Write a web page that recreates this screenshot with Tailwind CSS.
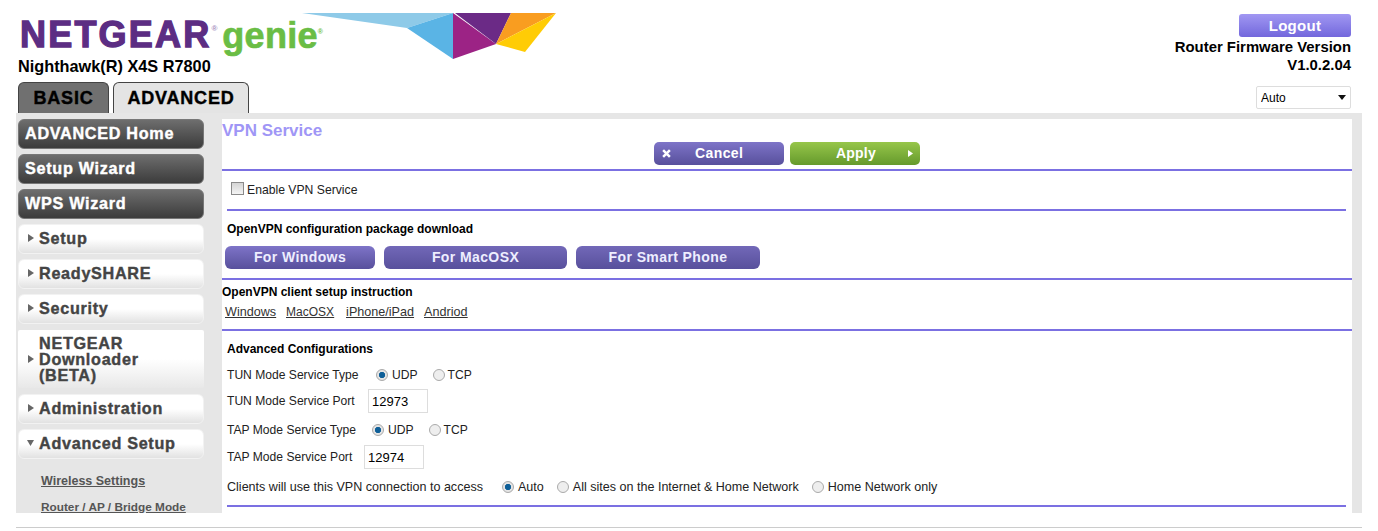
<!DOCTYPE html>
<html lang="en">
<head>
  <meta charset="UTF-8">
  <title>NETGEAR Router R7800</title>
  <script src="https://cdn.jsdelivr.net/npm/@tailwindcss/browser@4"></script>
</head>
<body class="relative bg-white h-[531px] overflow-hidden font-['Liberation_Sans',Arial,sans-serif] text-[12px] text-[#222]">

  <!-- header -->
  <header class="h-[113px] flex justify-between pl-[18px] pr-[27px]">
    <div class="flex flex-col">
      <div class="flex h-[43px] items-start pt-[14px]">
        <span class="ml-[2px] text-[36px] leading-[42px] font-bold tracking-[2.2px] text-[#5c2d83] [-webkit-text-stroke:1.3px_#5c2d83]">NETGEAR</span>
        <span class="text-[8px] leading-[30px] font-bold text-[#a58fbd]">®</span>
        <span class="ml-[5px] mt-[1px] text-[36px] leading-[42px] font-bold tracking-[0.3px] text-[#6abd45] [-webkit-text-stroke:0.7px_#6abd45]">genie</span>
        <span class="text-[7px] leading-[36px] font-bold text-[#6abd45]">®</span>
      </div>
      <div class="mt-[14px] text-[16.3px] leading-[18px] font-bold text-black">Nighthawk(R) X4S R7800</div>
      <nav class="mt-[7px] flex gap-[4px] font-bold text-[18px] tracking-[0.8px] text-black [-webkit-text-stroke:0.4px_#000]">
        <a class="w-[91px] h-[31px] flex items-center justify-center rounded-t-[6px] border border-b-0 border-[#444] bg-[#707070]">BASIC</a>
        <a class="w-[136px] h-[31px] flex items-center justify-center rounded-t-[6px] border border-b-0 border-[#444] bg-[#e4e4e4]">ADVANCED</a>
      </nav>
    </div>
    <div class="flex flex-col items-end pt-[14px]">
      <button class="w-[112px] h-[23px] rounded-[3px] bg-gradient-to-b from-[#a197f2] to-[#7367dc] text-white font-bold text-[15px] tracking-[0.3px] leading-[23px]">Logout</button>
      <div class="mt-[1px] text-right text-[14.9px] leading-[18px] font-bold text-black">Router Firmware Version<br>V1.0.2.04</div>
      <div class="relative mt-[12px] w-[95px] h-[23px]">
        <select class="appearance-none w-full h-full border border-[#ddd] rounded-[2px] pl-[4px] text-[12px] text-black bg-white">
          <option>Auto</option>
        </select>
        <svg class="absolute right-[5px] top-[9px]" width="8" height="5" viewBox="0 0 8 5"><polygon points="0,0 8,0 4,5" fill="#111"/></svg>
      </div>
    </div>
  </header>

  <!-- logo shards -->
  <svg class="absolute left-[302px] top-[13px]" width="258" height="48" viewBox="302 14 258 48">
    <polygon points="302,14 453,14 407,29" fill="#8ecae8"/>
    <polygon points="453,14 453,60 407,29" fill="#5ab4e5"/>
    <polygon points="453,14 496,45 453,60" fill="#9c2385"/>
    <polygon points="455,14 511,14 496,45" fill="#6b2a86"/>
    <polygon points="511,14 556,14 496,45" fill="#f99d20"/>
    <polygon points="556,14 525,53 496,45" fill="#ffcc05"/>
  </svg>

  <!-- main panel -->
  <div class="ml-[16px] w-[1346px] h-[400px] bg-[#e6e6e6] flex pt-[6px] pr-[10px] overflow-hidden">

    <!-- sidebar -->
    <aside class="w-[206px] pl-[2px] pr-[18px] shrink-0 flex flex-col gap-[5px] font-bold text-[16.2px] tracking-[0.7px] [-webkit-text-stroke:0.4px_currentColor]">
      <a class="h-[30px] shrink-0 flex items-center pl-[6px] pb-[2px] rounded-[6px] border border-[#777] bg-gradient-to-b from-[#6e6e6e] to-[#3c3c3c] text-white">ADVANCED Home</a>
      <a class="h-[30px] shrink-0 flex items-center pl-[6px] pb-[2px] rounded-[6px] border border-[#777] bg-gradient-to-b from-[#6e6e6e] to-[#3c3c3c] text-white">Setup Wizard</a>
      <a class="h-[30px] shrink-0 flex items-center pl-[6px] pb-[2px] rounded-[6px] border border-[#777] bg-gradient-to-b from-[#6e6e6e] to-[#3c3c3c] text-white">WPS Wizard</a>
      <a class="h-[30px] shrink-0 flex items-center pl-[9px] pb-[2px] rounded-[6px] border border-[#f2f2f2] bg-gradient-to-b from-white via-white to-[#e2e2e2] text-[#444]">
        <svg class="mr-[5px] shrink-0" width="6" height="8" viewBox="0 0 6 8"><polygon points="0,0 6,4 0,8" fill="#666"/></svg>Setup</a>
      <a class="h-[30px] shrink-0 flex items-center pl-[9px] pb-[2px] rounded-[6px] border border-[#f2f2f2] bg-gradient-to-b from-white via-white to-[#e2e2e2] text-[#444]">
        <svg class="mr-[5px] shrink-0" width="6" height="8" viewBox="0 0 6 8"><polygon points="0,0 6,4 0,8" fill="#666"/></svg>ReadySHARE</a>
      <a class="h-[30px] shrink-0 flex items-center pl-[9px] pb-[2px] rounded-[6px] border border-[#f2f2f2] bg-gradient-to-b from-white via-white to-[#e2e2e2] text-[#444]">
        <svg class="mr-[5px] shrink-0" width="6" height="8" viewBox="0 0 6 8"><polygon points="0,0 6,4 0,8" fill="#666"/></svg>Security</a>
      <a class="mt-[1px] h-[58px] shrink-0 flex items-center pl-[10px] rounded-[2px] bg-gradient-to-b from-white via-white to-[#e8e8e8] text-[#444] leading-[16px]">
        <svg class="mr-[5px] shrink-0" width="6" height="8" viewBox="0 0 6 8"><polygon points="0,0 6,4 0,8" fill="#666"/></svg><span>NETGEAR<br>Downloader<br>(BETA)</span></a>
      <a class="mt-[1px] h-[30px] shrink-0 flex items-center pl-[9px] pb-[2px] rounded-[6px] border border-[#f2f2f2] bg-gradient-to-b from-white via-white to-[#e2e2e2] text-[#444]">
        <svg class="mr-[5px] shrink-0" width="6" height="8" viewBox="0 0 6 8"><polygon points="0,0 6,4 0,8" fill="#666"/></svg>Administration</a>
      <a class="h-[30px] shrink-0 flex items-center pl-[8px] pb-[2px] rounded-[6px] border border-[#f2f2f2] bg-gradient-to-b from-white via-white to-[#e2e2e2] text-[#444]">
        <svg class="mr-[5px] shrink-0" width="7" height="6" viewBox="0 0 7 6"><polygon points="0,0 7,0 3.5,6" fill="#666"/></svg>Advanced Setup</a>
      <div class="mt-[5px] pl-[23px] text-[12.5px] tracking-normal [-webkit-text-stroke:0] text-[#555] leading-[25.5px]">
        <a class="block underline">Wireless Settings</a>
        <a class="block underline whitespace-nowrap text-[11.8px]">Router / AP / Bridge Mode</a>
      </div>
    </aside>

    <!-- form -->
    <main class="flex-1 bg-white flex flex-col overflow-hidden">
      <h1 class="h-[23px] pt-[2px] text-[17px] leading-[20px] font-bold text-[#9f96f6]">VPN Service</h1>
      <div class="h-[27px] flex gap-[6px] pl-[432px]">
        <button class="w-[130px] h-[23px] flex items-center rounded-[5px] bg-gradient-to-b from-[#7e74c8] to-[#58509c] text-white font-bold text-[14px] tracking-[0.4px]">
          <svg class="ml-[8px] mr-[24px]" width="9" height="9" viewBox="0 0 8 8"><path d="M1 1 7 7M7 1 1 7" stroke="#fff" stroke-width="2.2"/></svg>Cancel</button>
        <button class="w-[130px] h-[23px] flex items-center rounded-[5px] bg-gradient-to-b from-[#97c64a] to-[#659a2c] text-white font-bold text-[14px] tracking-[0.2px]">
          <span class="ml-[46px]">Apply</span>
          <svg class="ml-[32px]" width="5" height="7" viewBox="0 0 5 7"><polygon points="0,0 5,3.5 0,7" fill="#fff"/></svg></button>
      </div>
      <div class="h-[2px] shrink-0 bg-[#7b70e2]"></div>

      <label class="h-[38px] shrink-0 flex items-center pl-[9px] text-[12.2px] text-[#222]">
        <input type="checkbox" class="appearance-none w-[13px] h-[13px] mr-[3px] -mt-[4px] border border-[#8a8a8a] bg-gradient-to-b from-[#d4d4d4] to-[#f4f4f4]">Enable VPN Service
      </label>
      <div class="ml-[5px] mr-[6px] h-[2px] shrink-0 bg-[#7b70e2]"></div>

      <div class="h-[19px] mt-[9px] pl-[5px] font-bold leading-[19px] text-black">OpenVPN configuration package download</div>
      <div class="mt-[7px] h-[23px] shrink-0 flex gap-[9px] pl-[3px] text-[14px] font-bold tracking-[0.4px] text-[#eeeeff]">
        <button class="w-[150px] rounded-[6px] bg-gradient-to-b from-[#7e74c8] to-[#58509c]">For Windows</button>
        <button class="w-[183px] rounded-[6px] bg-gradient-to-b from-[#7268b8] to-[#58509c]">For MacOSX</button>
        <button class="w-[184px] rounded-[6px] bg-gradient-to-b from-[#7268b8] to-[#58509c]">For Smart Phone</button>
      </div>
      <div class="mt-[9px] h-[2px] shrink-0 bg-[#7b70e2]"></div>

      <div class="mt-[5px] h-[15px] font-bold leading-[15px] text-black">OpenVPN client setup instruction</div>
      <div class="mt-[3px] h-[18px] flex pl-[3px] text-[12.6px] leading-[18px] text-[#333] underline">
        <a>Windows</a><a class="ml-[10px] text-[12px]">MacOSX</a><a class="ml-[12px]">iPhone/iPad</a><a class="ml-[10px]">Andriod</a>
      </div>
      <div class="mt-[8px] h-[2px] shrink-0 bg-[#7b70e2]"></div>

      <div class="mt-[11px] h-[15px] pl-[5px] font-bold leading-[15px] text-black">Advanced Configurations</div>

      <div class="pl-[5px] flex flex-col text-[12.1px]">
        <div class="mt-[7px] h-[22px] flex items-center">
          <span class="w-[149px]">TUN Mode Service Type</span>
          <input type="radio" name="tun" checked class="appearance-none size-[12px] rounded-full border border-[#aaa] bg-[#eee] checked:bg-[radial-gradient(circle,#0f5f98_40%,#e4e4e4_48%)]">
          <span class="ml-[4px]">UDP</span>
          <input type="radio" name="tun" class="ml-[15px] appearance-none size-[12px] rounded-full border border-[#aaa] bg-[#eee]">
          <span class="ml-[3px]">TCP</span>
        </div>
        <div class="mt-[3px] h-[24px] flex items-center">
          <span class="w-[141px] pt-[1px]">TUN Mode Service Port</span>
          <input value="12973" class="w-[60px] h-[24px] border border-[#ddd] pl-[3px] text-[13px] text-black">
        </div>
        <div class="mt-[6px] h-[22px] flex items-center">
          <span class="w-[145px]">TAP Mode Service Type</span>
          <input type="radio" name="tap" checked class="appearance-none size-[12px] rounded-full border border-[#aaa] bg-[#eee] checked:bg-[radial-gradient(circle,#0f5f98_40%,#e4e4e4_48%)]">
          <span class="ml-[4px]">UDP</span>
          <input type="radio" name="tap" class="ml-[15px] appearance-none size-[12px] rounded-full border border-[#aaa] bg-[#eee]">
          <span class="ml-[3px]">TCP</span>
        </div>
        <div class="mt-[4px] h-[24px] flex items-center">
          <span class="w-[137px] pt-[1px]">TAP Mode Service Port</span>
          <input value="12974" class="w-[60px] h-[24px] border border-[#ddd] pl-[3px] text-[13px] text-black">
        </div>
        <div class="mt-[7px] h-[22px] flex items-center text-[12.55px]">
          <span class="w-[275px]">Clients will use this VPN connection to access</span>
          <input type="radio" name="acc" checked class="appearance-none size-[12px] rounded-full border border-[#aaa] bg-[#eee] checked:bg-[radial-gradient(circle,#0f5f98_40%,#e4e4e4_48%)]">
          <span class="ml-[4px]">Auto</span>
          <input type="radio" name="acc" class="ml-[13px] appearance-none size-[12px] rounded-full border border-[#aaa] bg-[#eee]">
          <span class="ml-[4px]">All sites on the Internet &amp; Home Network</span>
          <input type="radio" name="acc" class="ml-[13px] appearance-none size-[12px] rounded-full border border-[#aaa] bg-[#eee]">
          <span class="ml-[4px]">Home Network only</span>
        </div>
      </div>
      <div class="mt-[7px] ml-[5px] mr-[6px] h-[2px] shrink-0 bg-[#7b70e2]"></div>
    </main>
  </div>

  <div class="mt-[14px] ml-[16px] w-[1346px] h-[1px] bg-[#ccc]"></div>
</body>
</html>
